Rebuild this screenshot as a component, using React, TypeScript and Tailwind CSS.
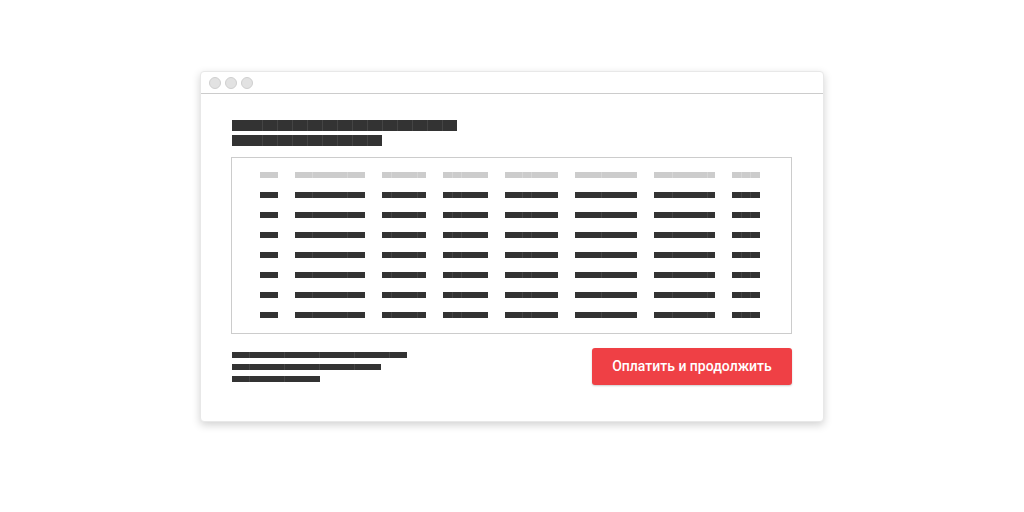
import React from 'react'

// segment widths for each placeholder bar
const columns: { width: number; segs: number[] }[] = [
  { width: 18, segs: [18] },
  { width: 70, segs: [17, 35, 18] },
  { width: 44, segs: [9, 26, 9] },
  { width: 45, segs: [9, 9, 27] },
  { width: 53, segs: [17, 9, 27] },
  { width: 62, segs: [26, 36] },
  { width: 61, segs: [18, 35, 8] },
  { width: 28, segs: [9, 9, 10] },
]

const footerLines = [
  [17, 35, 35, 35, 35, 18],
  [17, 35, 35, 35, 27],
  [17, 35, 36],
]

const titleLines = [
  [30, ...Array(13).fill(15)],
  [30, ...Array(8).fill(15)],
]

function Bar({ segs, tone, height }: { segs: number[]; tone: 'dark' | 'light'; height: string }) {
  return (
    <div className={`flex ${height}`}>
      {segs.map((w, i) => (
        <div
          key={i}
          className={`${height} ${tone === 'dark' ? 'bg-[#333333]' : 'bg-[#cccccc]'} ${
            i > 0 ? (tone === 'dark' ? 'border-l border-[#444444]' : 'border-l border-[#d6d6d6]') : ''
          }`}
          style={{ width: w }}
        />
      ))}
    </div>
  )
}

export default function App() {
  const rows = Array.from({ length: 8 })

  return (
    <div className="w-[1024px] h-[512px] bg-white pt-[71px]" style={{ fontFamily: 'Roboto, "Liberation Sans", sans-serif' }}>
      <div className="mx-auto w-[624px] h-[351px] rounded-[4px] border border-[#e8e8e8] bg-white shadow-[0_3px_8px_rgba(0,0,0,0.18)] flex flex-col">
        {/* Title bar */}
        <div className="h-[22px] flex items-center gap-1 pl-2 border-b border-[#cccccc] shrink-0">
          <span className="w-3 h-3 rounded-full bg-[#e2e2e2] border border-[#cfcfcf]" />
          <span className="w-3 h-3 rounded-full bg-[#e2e2e2] border border-[#cfcfcf]" />
          <span className="w-3 h-3 rounded-full bg-[#e2e2e2] border border-[#cfcfcf]" />
        </div>

        <div className="flex flex-col pl-[30px] pr-[31px] pt-[26px]">
          {/* Heading */}
          <div className="flex flex-col gap-1 ml-px">
            {titleLines.map((segs, i) => (
              <Bar key={i} segs={segs} tone="dark" height="h-[11px]" />
            ))}
          </div>

          {/* Table */}
          <div className="mt-[11px] border border-[#cccccc] pt-[14px] pb-[15px] pl-[28px] flex flex-col gap-[14px]">
            {rows.map((_, r) => (
              <div key={r} className="flex gap-x-[17px]">
                {columns.map((c, i) => (
                  <div key={i} style={{ width: c.width }}>
                    <Bar segs={c.segs} tone={r === 0 ? 'light' : 'dark'} height="h-[6px]" />
                  </div>
                ))}
              </div>
            ))}
          </div>

          {/* Footer */}
          <div className="mt-[14px] flex items-center justify-between">
            <div className="flex flex-col gap-[6px] ml-px">
              {footerLines.map((segs, i) => (
                <Bar key={i} segs={segs} tone="dark" height="h-[6px]" />
              ))}
            </div>
            <button className="w-[200px] h-[37px] rounded-[3px] bg-[#ef4045] text-white text-[14px] font-medium shadow-[0_1px_2px_rgba(0,0,0,0.2)]">
              Оплатить и продолжить
            </button>
          </div>
        </div>
      </div>
    </div>
  )
}
